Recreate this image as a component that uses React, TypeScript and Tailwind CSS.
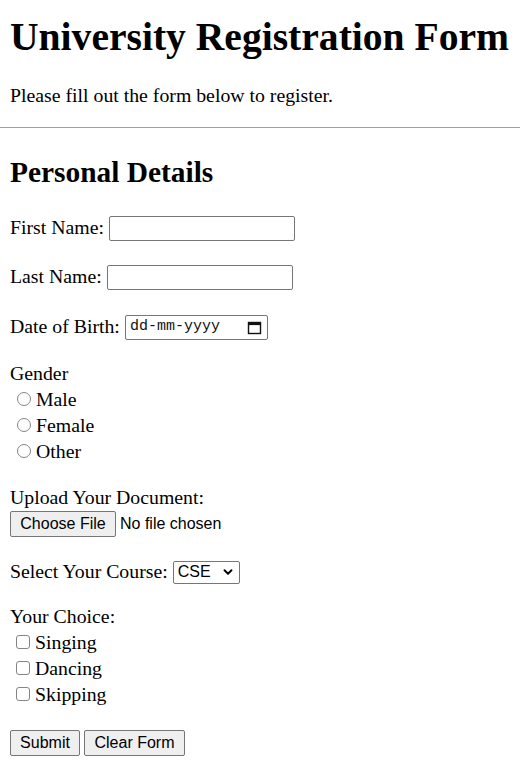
import { ChevronDown } from "lucide-react"

const serif = { fontFamily: '"Liberation Serif", "Times New Roman", serif' }
const sans = { fontFamily: '"Liberation Sans", Arial, sans-serif' }
const mono = { fontFamily: '"Liberation Mono", "Courier New", monospace' }

function Radio({ label }: { label: string }) {
  return (
    <label className="flex h-[26px] items-center">
      <input
        type="radio"
        name="gender"
        className="ml-[7px] mr-[5px] -mt-[3px] h-[14px] w-[14px] appearance-none rounded-full border border-[#858585] bg-white"
      />
      <span>{label}</span>
    </label>
  )
}

function Check({ label }: { label: string }) {
  return (
    <label className="flex h-[26px] items-center">
      <input
        type="checkbox"
        className="ml-[6px] mr-[5px] -mt-[3px] h-[14px] w-[14px] appearance-none rounded-[3px] border border-[#858585] bg-white"
      />
      <span>{label}</span>
    </label>
  )
}

function CalendarIcon() {
  return (
    <svg width="15" height="15" viewBox="0 0 15 15" fill="none">
      <rect x="1.5" y="2.5" width="12" height="11" stroke="#111" strokeWidth="1.4" />
      <rect x="1.5" y="2.5" width="12" height="2.6" fill="#111" />
    </svg>
  )
}

export default function App() {
  return (
    <div className="min-h-[778px] bg-white px-[10px] text-black" style={serif}>
      <h1 className="pt-[15px] text-[39.6px] leading-[44px] font-bold whitespace-nowrap">
        University Registration Form
      </h1>
      <p className="mt-[25px] text-[19.8px] leading-[22px]">Please fill out the form below to register.</p>
      <hr className="mt-[21px] -mx-[10px] border-t border-[#9f9f9f]" />

      <form className="text-[19.8px]">
        <h2 className="mt-[28px] text-[29.4px] leading-[33px] font-bold">Personal Details</h2>

        <div className="mt-[26px] flex h-[26px] items-center gap-[5px]">
          <label>First Name:</label>
          <input type="text" className="h-[25px] w-[186px] rounded-[2px] border border-[#767676] bg-white" />
        </div>

        <div className="mt-[23px] flex h-[26px] items-center gap-[5px]">
          <label>Last Name:</label>
          <input type="text" className="h-[25px] w-[186px] rounded-[2px] border border-[#767676] bg-white" />
        </div>

        <div className="mt-[24px] flex h-[26px] items-center gap-[5px]">
          <label>Date of Birth:</label>
          <div className="flex h-[25px] w-[143px] items-center justify-between rounded-[2px] border border-[#767676] bg-white pl-[4px] pr-[5px]">
            <span className="text-[15px] text-[#111]" style={mono}>dd-mm-yyyy</span>
            <CalendarIcon />
          </div>
        </div>

        <div className="mt-[21px] flex h-[26px] items-center">Gender</div>
        <Radio label="Male" />
        <Radio label="Female" />
        <Radio label="Other" />

        <div className="mt-[20px] flex h-[26px] items-center">Upload Your Document:</div>
        <div className="flex h-[26px] items-center gap-[4px] text-[16px]" style={sans}>
          <button type="button" className="h-[26px] w-[106px] rounded-[2px] border border-[#767676] bg-[#efefef]">
            Choose File
          </button>
          <span>No file chosen</span>
        </div>

        <div className="mt-[22px] flex h-[26px] items-center gap-[5px]">
          <label>Select Your Course:</label>
          <div
            className="flex h-[23px] w-[67px] items-center justify-between rounded-[2px] border border-[#767676] bg-white pl-[4px] pr-[4px] text-[16px]"
            style={sans}
          >
            <span>CSE</span>
            <ChevronDown size={14} strokeWidth={3.2} />
          </div>
        </div>

        <div className="mt-[19px] flex h-[26px] items-center">Your Choice:</div>
        <Check label="Singing" />
        <Check label="Dancing" />
        <Check label="Skipping" />

        <div className="mt-[22px] flex h-[26px] items-center gap-[4px] text-[16px]" style={sans}>
          <button type="submit" className="h-[26px] w-[70px] rounded-[2px] border border-[#767676] bg-[#efefef]">
            Submit
          </button>
          <button type="reset" className="h-[26px] w-[101px] rounded-[2px] border border-[#767676] bg-[#efefef]">
            Clear Form
          </button>
        </div>
      </form>
    </div>
  )
}
